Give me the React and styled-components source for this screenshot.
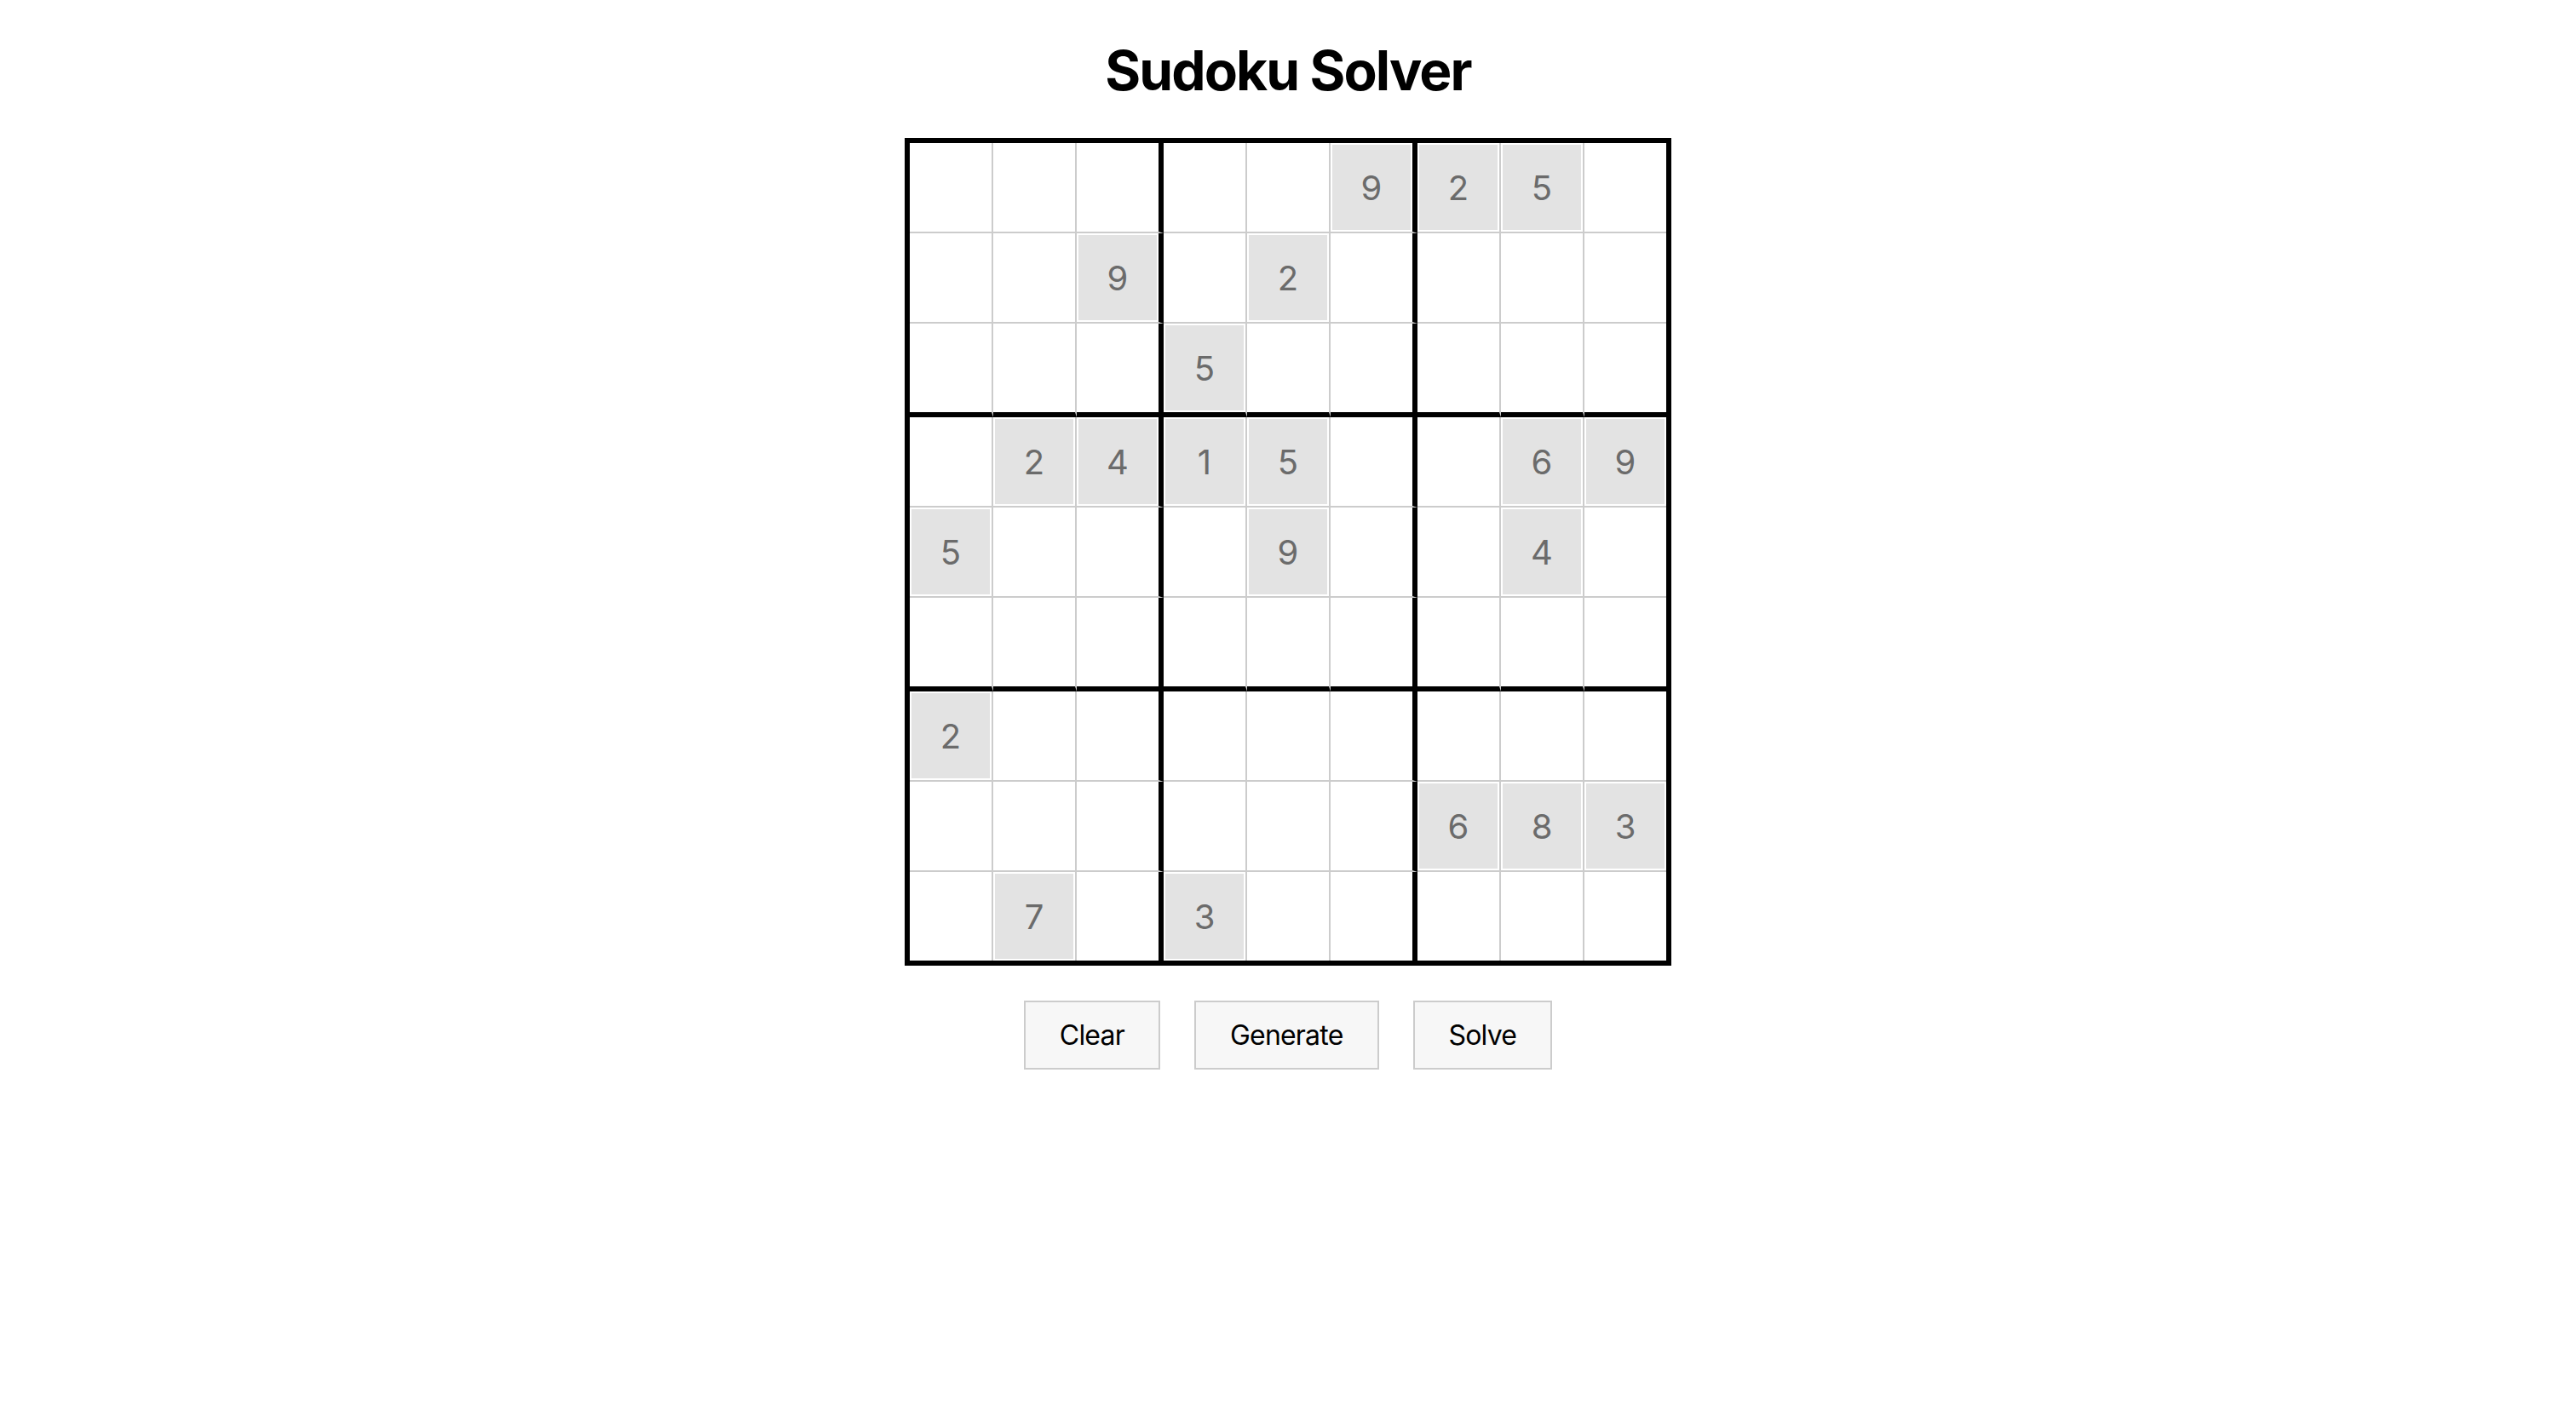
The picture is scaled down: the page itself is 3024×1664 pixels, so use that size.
import React, { useState } from "react";
import styled, { createGlobalStyle } from "styled-components";

const GlobalStyle = createGlobalStyle`
  html, body {
    margin: 0;
    padding: 0;
    background: #ffffff;
  }
  body {
    font-family: Inter, "Noto Sans", "Liberation Sans", sans-serif;
    color: #000;
  }
`;

const Page = styled.main`
  display: flex;
  flex-direction: column;
  align-items: center;
  padding-top: 44px;
`;

const Title = styled.h1`
  margin: 0 0 41px;
  font-family: Inter, "Liberation Sans", sans-serif;
  font-size: 64px;
  line-height: 77px;
  font-weight: 700;
  letter-spacing: -1.9px;
  color: #000;
`;

const Board = styled.div`
  display: grid;
  grid-template-columns: repeat(9, auto);
  border: 6px solid #000;
`;

const lineFor = (idx) =>
  idx === 8 ? "none" : idx % 3 === 2 ? "6px solid #000" : "2px solid #cccccc";

const Cell = styled.div`
  box-sizing: content-box;
  width: 92px;
  height: 100px;
  padding: 2px;
  border-right: ${(p) => lineFor(p.$col)};
  border-bottom: ${(p) => lineFor(p.$row)};
  background: #fff;
`;

const CellInput = styled.input`
  display: block;
  box-sizing: border-box;
  width: 100%;
  height: 100%;
  margin: 0;
  padding: 0;
  border: none;
  outline: none;
  text-align: center;
  font-family: Inter, "Liberation Sans", sans-serif;
  font-size: 40px;
  line-height: 100px;
  background: ${(p) => (p.$given ? "#e3e3e3" : "transparent")};
  color: ${(p) => (p.$given ? "#6b6b6b" : "#222")};
`;

const Actions = styled.div`
  display: flex;
  gap: 40px;
  margin-top: 41px;
`;

const ActionButton = styled.button`
  margin: 0;
  padding: 20px 40px;
  border: 2px solid #cccccc;
  border-radius: 0;
  background: #f7f7f7;
  font-family: Inter, "Liberation Sans", sans-serif;
  font-size: 32px;
  line-height: 37px;
  letter-spacing: -0.8px;
  color: #000;
  cursor: pointer;
`;

const PUZZLE = [
  [0, 0, 0, 0, 0, 9, 2, 5, 0],
  [0, 0, 9, 0, 2, 0, 0, 0, 0],
  [0, 0, 0, 5, 0, 0, 0, 0, 0],
  [0, 2, 4, 1, 5, 0, 0, 6, 9],
  [5, 0, 0, 0, 9, 0, 0, 4, 0],
  [0, 0, 0, 0, 0, 0, 0, 0, 0],
  [2, 0, 0, 0, 0, 0, 0, 0, 0],
  [0, 0, 0, 0, 0, 0, 6, 8, 3],
  [0, 7, 0, 3, 0, 0, 0, 0, 0],
];

const copy = (b) => b.map((r) => r.slice());

function canPlace(b, r, c, v) {
  for (let i = 0; i < 9; i++) {
    if (b[r][i] === v || b[i][c] === v) return false;
  }
  const br = r - (r % 3);
  const bc = c - (c % 3);
  for (let i = 0; i < 3; i++)
    for (let j = 0; j < 3; j++) if (b[br + i][bc + j] === v) return false;
  return true;
}

function solve(b) {
  for (let r = 0; r < 9; r++) {
    for (let c = 0; c < 9; c++) {
      if (b[r][c] === 0) {
        for (let v = 1; v <= 9; v++) {
          if (canPlace(b, r, c, v)) {
            b[r][c] = v;
            if (solve(b)) return true;
            b[r][c] = 0;
          }
        }
        return false;
      }
    }
  }
  return true;
}

export default function App() {
  const [given, setGiven] = useState(copy(PUZZLE));
  const [board, setBoard] = useState(copy(PUZZLE));

  const handleChange = (r, c, value) => {
    const v = parseInt(value.slice(-1), 10);
    const next = copy(board);
    next[r][c] = v >= 1 && v <= 9 ? v : 0;
    setBoard(next);
  };

  const handleClear = () => {
    const empty = PUZZLE.map((r) => r.map(() => 0));
    setGiven(copy(empty));
    setBoard(copy(empty));
  };

  const handleGenerate = () => {
    setGiven(copy(PUZZLE));
    setBoard(copy(PUZZLE));
  };

  const handleSolve = () => {
    const next = copy(board);
    if (solve(next)) setBoard(next);
  };

  return (
    <>
      <GlobalStyle />
      <Page>
        <Title>Sudoku Solver</Title>
        <Board>
          {board.map((row, r) =>
            row.map((val, c) => {
              const isGiven = given[r][c] !== 0;
              return (
                <Cell key={`${r}-${c}`} $row={r} $col={c}>
                  <CellInput
                    type="text"
                    inputMode="numeric"
                    value={val === 0 ? "" : String(val)}
                    readOnly={isGiven}
                    $given={isGiven}
                    onChange={(e) => handleChange(r, c, e.target.value)}
                  />
                </Cell>
              );
            })
          )}
        </Board>
        <Actions>
          <ActionButton onClick={handleClear}>Clear</ActionButton>
          <ActionButton onClick={handleGenerate}>Generate</ActionButton>
          <ActionButton onClick={handleSolve}>Solve</ActionButton>
        </Actions>
      </Page>
    </>
  );
}
